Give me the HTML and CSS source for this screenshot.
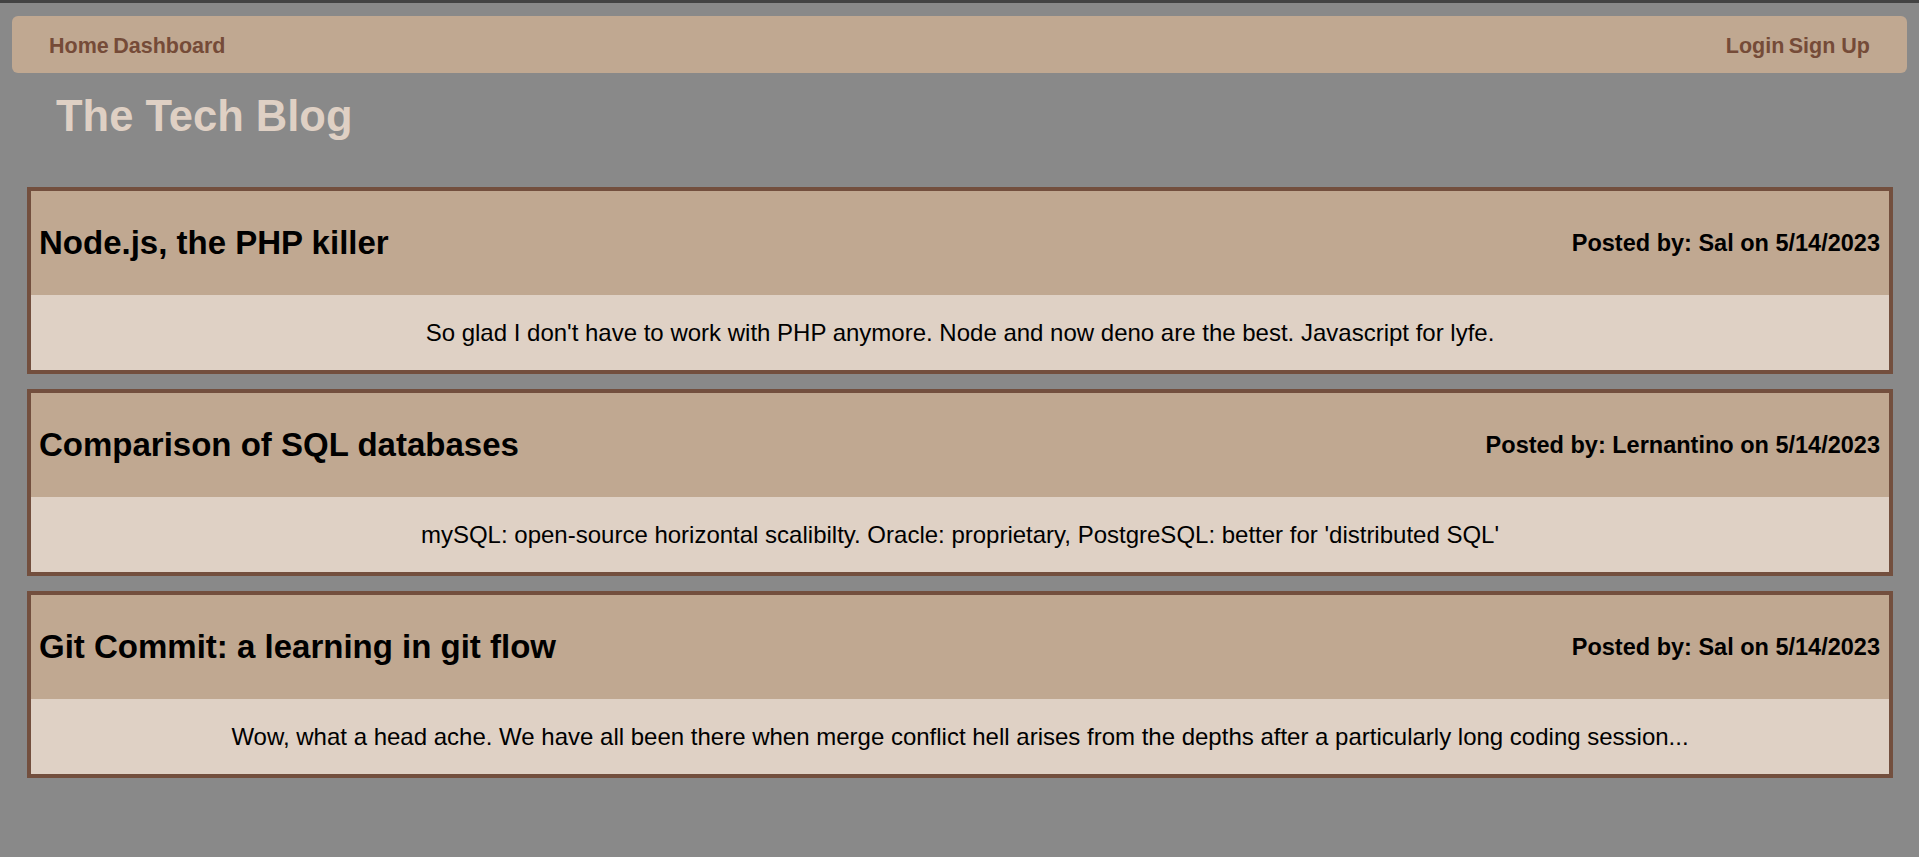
FILE: index.html
```html
<!DOCTYPE html>
<html lang="en">
<head>
<meta charset="utf-8">
<title>The Tech Blog</title>
<link rel="stylesheet" href="styles.css">
</head>
<body>
  <nav class="navbar">
    <div class="nav-group">
      <a class="nav-link" href="#">Home</a>
      <a class="nav-link" href="#">Dashboard</a>
    </div>
    <div class="nav-group">
      <a class="nav-link" href="#">Login</a>
      <a class="nav-link" href="#">Sign Up</a>
    </div>
  </nav>
  <h1 class="site-title">The Tech Blog</h1>
  <main class="posts">
    <article class="post">
      <header class="post-header">
        <h2 class="post-title">Node.js, the PHP killer</h2>
        <span class="post-meta">Posted by: Sal on 5/14/2023</span>
      </header>
      <p class="post-body">So glad I don't have to work with PHP anymore. Node and now deno are the best. Javascript for lyfe.</p>
    </article>
    <article class="post">
      <header class="post-header">
        <h2 class="post-title">Comparison of SQL databases</h2>
        <span class="post-meta">Posted by: Lernantino on 5/14/2023</span>
      </header>
      <p class="post-body">mySQL: open-source horizontal scalibilty. Oracle: proprietary, PostgreSQL: better for 'distributed SQL'</p>
    </article>
    <article class="post">
      <header class="post-header">
        <h2 class="post-title">Git Commit: a learning in git flow</h2>
        <span class="post-meta">Posted by: Sal on 5/14/2023</span>
      </header>
      <p class="post-body">Wow, what a head ache. We have all been there when merge conflict hell arises from the depths after a particularly long coding session...</p>
    </article>
  </main>
</body>
</html>
```

FILE: styles.css
```css
html, body {
  margin: 0;
  padding: 0;
}

html {
  background: #898989;
}

body {
  border-top: 3px solid #434343;
  font-family: "Liberation Sans", Arial, sans-serif;
  color: #000;
}

.navbar {
  box-sizing: border-box;
  margin: 13px 12px 0 12px;
  height: 57px;
  padding: 4px 37px 0 37px;
  background: #c0a891;
  border-radius: 6px;
  display: flex;
  align-items: center;
  justify-content: space-between;
}

.nav-link {
  color: #754b38;
  font-weight: bold;
  font-size: 21.5px;
  text-decoration: none;
}

.site-title {
  margin: 19px 0 46px 56px;
  font-size: 43.5px;
  line-height: 49px;
  font-weight: bold;
  color: #dfd0c4;
}

.posts {
  display: flex;
  flex-direction: column;
  gap: 15px;
  margin: 0 26px 0 27px;
}

.post {
  border: 4px solid #734f3e;
  background: #dfd1c5;
}

.post-header {
  height: 104px;
  padding: 0 9px 0 8px;
  background: #c0a891;
  display: flex;
  align-items: center;
  justify-content: space-between;
}

.post-title {
  margin: 0;
  font-size: 33px;
  line-height: 38px;
  font-weight: bold;
}

.post-meta {
  font-size: 23.5px;
  font-weight: bold;
}

.post-body {
  margin: 0;
  padding: 24px 0;
  font-size: 24px;
  line-height: 27px;
  text-align: center;
}
```
